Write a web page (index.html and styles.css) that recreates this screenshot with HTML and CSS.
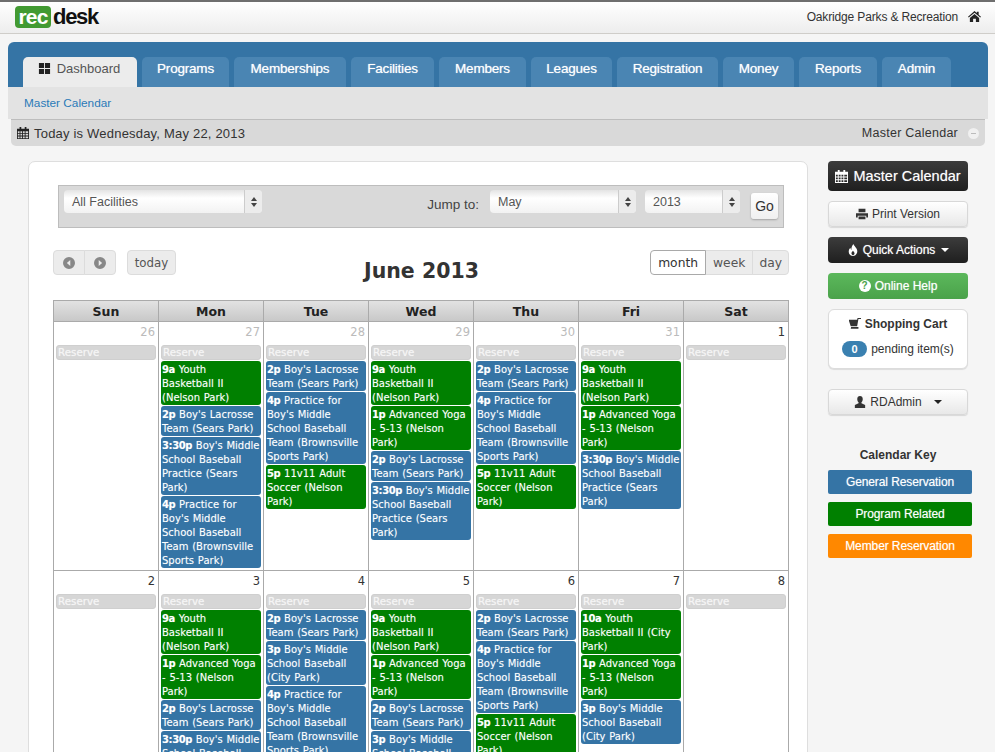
FILE: index.html
```html
<!DOCTYPE html>
<html lang="en">
<head>
<meta charset="utf-8">
<title>Rec Desk - Master Calendar</title>
<link rel="stylesheet" href="styles.css">
</head>
<body>
<svg class="defs" width="0" height="0">
  <symbol id="i-cal" viewBox="0 0 14 14"><path d="M3 0h2v2h4V0h2v2h3v12H0V2h3zM1 5v2h2V5zm3 0v2h2V5zm3 0v2h2V5zm3 0v2h3V5zM1 8v2h2V8zm3 0v2h2V8zm3 0v2h2V8zm3 0v2h3V8zM1 11v2h2v-2zm3 0v2h2v-2zm3 0v2h2v-2zm3 0v2h3v-2z" fill-rule="evenodd"/></symbol>
  <symbol id="i-dash" viewBox="0 0 14 14"><path d="M1 1h5.500v5.500H1zM7.500 1H13v5.500H7.500zM1 7.500h5.500V13H1zM7.500 7.500H13V13H7.500z"/></symbol>
  <symbol id="i-home" viewBox="0 0 14 14"><path d="M7 1l2.500 2.200V2h2v3l2.500 2.300-.8.800L7 3 .8 8.100 0 7.300zM2 8.500L7 4.300l5 4.200V13H8.500V9.500h-3V13H2z"/></symbol>
  <symbol id="i-print" viewBox="0 0 14 14"><path d="M3 1h8v4H3zM0 6h14v5h-2V9H2v2H0zM3 10h8v3H3z"/></symbol>
  <symbol id="i-fire" viewBox="0 0 14 14"><path d="M7.500 0c.5 2.500 4.500 4.500 4.500 8.500 0 3-2.200 5.500-5 5.500s-5-2.200-5-5c0-2 1-3.500 2-4.500 0 1.200.4 2 1.200 2.500C4.800 4 6 2 7.500 0zM7 8c-1 1.200-1.800 2-1.800 3.200 0 1 .8 1.800 1.800 1.800s1.800-.8 1.800-1.800C8.800 10 7.800 9.200 7 8z" fill-rule="evenodd"/></symbol>
  <symbol id="i-cart" viewBox="0 0 14 14"><path d="M0 2h9.500l.5-2h4v1.300h-3L9.500 9.500H2L0 3.500zM2.500 10.500H11v2H2z"/></symbol>
  <symbol id="i-user" viewBox="0 0 14 14"><path d="M7 0c2 0 3.200 1.500 3.200 3.600 0 1.600-.6 3-1.500 3.800v1.100L13 10.500V14H1v-3.500l4.300-2V7.400C4.400 6.600 3.800 5.200 3.800 3.600 3.800 1.500 5 0 7 0z"/></symbol>
  <symbol id="i-prev" viewBox="0 0 14 14"><path d="M7 0a7 7 0 1 1 0 14A7 7 0 0 1 7 0zm1.500 3.500L4.500 7l4 3.500z" fill-rule="evenodd"/></symbol>
  <symbol id="i-next" viewBox="0 0 14 14"><path d="M7 0a7 7 0 1 1 0 14A7 7 0 0 1 7 0zM5.500 3.500v7l4-3.500z" fill-rule="evenodd"/></symbol>
  <symbol id="i-updown" viewBox="0 0 6 10"><path d="M3 0l3 4H0zM0 6h6l-3 4z"/></symbol>
</svg>
<div class="page">
  <header class="topbar">
    <div class="logo"><span class="logo-rec">rec</span><span class="logo-desk">desk</span></div>
    <div class="org">Oakridge Parks &amp; Recreation <svg class="ico-home"><use href="#i-home"/></svg></div>
  </header>

  <nav class="panel">
    <div class="tabs">
      <a class="tab tab-active"><svg class="ico-dash"><use href="#i-dash"/></svg>Dashboard</a>
      <a class="tab">Programs</a>
      <a class="tab">Memberships</a>
      <a class="tab">Facilities</a>
      <a class="tab">Members</a>
      <a class="tab">Leagues</a>
      <a class="tab">Registration</a>
      <a class="tab">Money</a>
      <a class="tab">Reports</a>
      <a class="tab">Admin</a>
    </div>
    <div class="subnav"><a class="sublink">Master Calendar</a></div>
  </nav>
  <div class="todaybar">
    <div class="today-left"><svg class="ico-cal"><use href="#i-cal"/></svg>Today is Wednesday, May 22, 2013</div>
    <div class="today-right">Master Calendar<span class="collapse"></span></div>
  </div>

  <div class="content">
    <main class="card">
      <div class="filter">
        <div class="sel sel-fac"><span>All Facilities</span><i class="sel-arrow"><svg class="ico-updown"><use href="#i-updown"/></svg></i></div>
        <div class="jump">
          <label class="jump-label">Jump to:</label>
          <div class="sel sel-month"><span>May</span><i class="sel-arrow"><svg class="ico-updown"><use href="#i-updown"/></svg></i></div>
          <div class="sel sel-year"><span>2013</span><i class="sel-arrow"><svg class="ico-updown"><use href="#i-updown"/></svg></i></div>
          <button class="go">Go</button>
        </div>
      </div>

      <div class="cal-tools">
        <div class="tools-left">
          <div class="btn-group">
            <span class="fc-btn fc-arrow"><svg class="ico-nav"><use href="#i-prev"/></svg></span>
            <span class="fc-btn fc-arrow"><svg class="ico-nav"><use href="#i-next"/></svg></span>
          </div>
          <span class="fc-btn fc-today">today</span>
        </div>
        <h1 class="cal-title">June 2013</h1>
        <div class="btn-group">
          <span class="fc-btn fc-view fc-on">month</span>
          <span class="fc-btn fc-view">week</span>
          <span class="fc-btn fc-view fc-day">day</span>
        </div>
      </div>

      <div class="cal">
        <div class="dow">Sun</div><div class="dow">Mon</div><div class="dow">Tue</div><div class="dow">Wed</div><div class="dow">Thu</div><div class="dow">Fri</div><div class="dow">Sat</div>

        <div class="day"><div class="num off">26</div><div class="reserve">Reserve</div></div>
        <div class="day"><div class="num off">27</div><div class="reserve">Reserve</div>
          <div class="ev g"><b>9a</b> Youth Basketball II (Nelson Park)</div>
          <div class="ev"><b>2p</b> Boy's Lacrosse Team (Sears Park)</div>
          <div class="ev"><b>3:30p</b> Boy's Middle School Baseball Practice (Sears Park)</div>
          <div class="ev"><b>4p</b> Practice for Boy's Middle School Baseball Team (Brownsville Sports Park)</div>
        </div>
        <div class="day"><div class="num off">28</div><div class="reserve">Reserve</div>
          <div class="ev"><b>2p</b> Boy's Lacrosse Team (Sears Park)</div>
          <div class="ev"><b>4p</b> Practice for Boy's Middle School Baseball Team (Brownsville Sports Park)</div>
          <div class="ev g"><b>5p</b> 11v11 Adult Soccer (Nelson Park)</div>
        </div>
        <div class="day"><div class="num off">29</div><div class="reserve">Reserve</div>
          <div class="ev g"><b>9a</b> Youth Basketball II (Nelson Park)</div>
          <div class="ev g"><b>1p</b> Advanced Yoga - 5-13 (Nelson Park)</div>
          <div class="ev"><b>2p</b> Boy's Lacrosse Team (Sears Park)</div>
          <div class="ev"><b>3:30p</b> Boy's Middle School Baseball Practice (Sears Park)</div>
        </div>
        <div class="day"><div class="num off">30</div><div class="reserve">Reserve</div>
          <div class="ev"><b>2p</b> Boy's Lacrosse Team (Sears Park)</div>
          <div class="ev"><b>4p</b> Practice for Boy's Middle School Baseball Team (Brownsville Sports Park)</div>
          <div class="ev g"><b>5p</b> 11v11 Adult Soccer (Nelson Park)</div>
        </div>
        <div class="day"><div class="num off">31</div><div class="reserve">Reserve</div>
          <div class="ev g"><b>9a</b> Youth Basketball II (Nelson Park)</div>
          <div class="ev g"><b>1p</b> Advanced Yoga - 5-13 (Nelson Park)</div>
          <div class="ev"><b>3:30p</b> Boy's Middle School Baseball Practice (Sears Park)</div>
        </div>
        <div class="day"><div class="num">1</div><div class="reserve">Reserve</div></div>

        <div class="day"><div class="num">2</div><div class="reserve">Reserve</div></div>
        <div class="day"><div class="num">3</div><div class="reserve">Reserve</div>
          <div class="ev g"><b>9a</b> Youth Basketball II (Nelson Park)</div>
          <div class="ev g"><b>1p</b> Advanced Yoga - 5-13 (Nelson Park)</div>
          <div class="ev"><b>2p</b> Boy's Lacrosse Team (Sears Park)</div>
          <div class="ev"><b>3:30p</b> Boy's Middle School Baseball Practice (Sears Park)</div>
        </div>
        <div class="day"><div class="num">4</div><div class="reserve">Reserve</div>
          <div class="ev"><b>2p</b> Boy's Lacrosse Team (Sears Park)</div>
          <div class="ev"><b>3p</b> Boy's Middle School Baseball (City Park)</div>
          <div class="ev"><b>4p</b> Practice for Boy's Middle School Baseball Team (Brownsville Sports Park)</div>
        </div>
        <div class="day"><div class="num">5</div><div class="reserve">Reserve</div>
          <div class="ev g"><b>9a</b> Youth Basketball II (Nelson Park)</div>
          <div class="ev g"><b>1p</b> Advanced Yoga - 5-13 (Nelson Park)</div>
          <div class="ev"><b>2p</b> Boy's Lacrosse Team (Sears Park)</div>
          <div class="ev"><b>3p</b> Boy's Middle School Baseball (City Park)</div>
        </div>
        <div class="day"><div class="num">6</div><div class="reserve">Reserve</div>
          <div class="ev"><b>2p</b> Boy's Lacrosse Team (Sears Park)</div>
          <div class="ev"><b>4p</b> Practice for Boy's Middle School Baseball Team (Brownsville Sports Park)</div>
          <div class="ev g"><b>5p</b> 11v11 Adult Soccer (Nelson Park)</div>
        </div>
        <div class="day"><div class="num">7</div><div class="reserve">Reserve</div>
          <div class="ev g"><b>10a</b> Youth Basketball II (City Park)</div>
          <div class="ev g"><b>1p</b> Advanced Yoga - 5-13 (Nelson Park)</div>
          <div class="ev"><b>3p</b> Boy's Middle School Baseball (City Park)</div>
        </div>
        <div class="day"><div class="num">8</div><div class="reserve">Reserve</div></div>
      </div>
    </main>

    <aside class="side">
      <a class="sbtn sbtn-dark sbtn-big"><svg class="ico-big"><use href="#i-cal"/></svg>Master Calendar</a>
      <a class="sbtn sbtn-light"><svg class="ico"><use href="#i-print"/></svg>Print Version</a>
      <a class="sbtn sbtn-dark sbtn-bold"><svg class="ico"><use href="#i-fire"/></svg>Quick Actions<i class="caret"></i></a>
      <a class="sbtn sbtn-green sbtn-bold"><span class="help">?</span>Online Help</a>
      <div class="cart">
        <div class="cart-title"><svg class="ico"><use href="#i-cart"/></svg>Shopping Cart</div>
        <div class="cart-line"><span class="badge">0</span>pending item(s)</div>
      </div>
      <a class="sbtn sbtn-light sbtn-user"><svg class="ico"><use href="#i-user"/></svg>RDAdmin<i class="caret caret-dark"></i></a>
      <div class="key-title">Calendar Key</div>
      <div class="key key-blue">General Reservation</div>
      <div class="key key-green">Program Related</div>
      <div class="key key-orange">Member Reservation</div>
    </aside>
  </div>
</div>
</body>
</html>
```

FILE: styles.css
```css
html, body {
  margin: 0;
  padding: 0;
  height: 752px;
  overflow: hidden;
  background: #f5f5f5;
}
body {
  font-family: "Liberation Sans", Arial, sans-serif;
  font-size: 13px;
  color: #333;
}
.defs { display: block; height: 0; }
svg { fill: currentColor; display: inline-block; }
.page { height: 752px; overflow: hidden; }

.topbar {
  height: 31px;
  border-top: 2px solid #6f6f6f;
  border-bottom: 1px solid #cfcdc9;
  background: linear-gradient(#ffffff, #ededed);
  display: flex;
  justify-content: space-between;
  align-items: center;
  padding: 0 14px 0 15px;
}
.logo { display: flex; align-items: center; font-weight: bold; font-size: 21px; margin-top: -2px; }
.logo-rec {
  background: #429a32;
  color: #fff;
  border-radius: 4px;
  height: 22px;
  width: 36px;
  display: flex;
  align-items: center;
  justify-content: center;
  letter-spacing: -0.8px;
}
.logo-desk { color: #111; margin-left: 2px; font-size: 22px; letter-spacing: -1.3px; }
.org { display: flex; align-items: center; font-size: 12px; letter-spacing: -0.15px; color: #333; margin-top: -2px; }
.ico-home { width: 13px; height: 13px; margin-left: 10px; color: #222; }

.panel {
  margin: 8px 7px 0 8px;
  border-radius: 6px 6px 0 0;
  background: #3574a5;
  padding-top: 15px;
}
.tabs {
  display: grid;
  grid-template-columns: 114px 87px 112px 83px 87px 81px 101px 71px 78px 69px;
  column-gap: 5px;
  padding-left: 15px;
  height: 30px;
}
.tab {
  background: #4a85b3;
  border-radius: 5px 5px 0 0;
  color: #fff;
  font-size: 13.500px;
  letter-spacing: -0.2px;
  display: flex;
  align-items: center;
  justify-content: center;
  padding-bottom: 7px;
  box-sizing: border-box;
  text-shadow: 0 0 1px rgba(255,255,255,.7);
}
.tab-active {
  background: #ececec;
  color: #555;
  letter-spacing: 0;
  font-size: 13px;
  padding-right: 2px;
  text-shadow: none;
}
.ico-dash { width: 13px; height: 13px; margin-right: 6px; color: #222; }
.subnav {
  background: #e3e3e3;
  height: 32px;
  padding-left: 16px;
  display: flex;
  align-items: center;
}
.sublink { color: #2a7ab8; font-size: 11.800px; }

.todaybar {
  margin: 0 10px 0 11px;
  height: 26px;
  border-top: 1px solid #bdbdbd;
  background: #d9d9d9;
  border-radius: 0 0 5px 5px;
  display: flex;
  align-items: center;
  justify-content: space-between;
  padding: 0 6px 0 6px;
  font-size: 13px;
  letter-spacing: 0.2px;
  color: #333;
}
.today-left, .today-right { display: flex; align-items: center; }
.ico-cal { width: 12px; height: 12px; margin-right: 5px; color: #222; }
.today-right { font-size: 12.500px; letter-spacing: 0.25px; }
.collapse {
  width: 11px;
  height: 11px;
  border-radius: 50%;
  background: #f0f0f0;
  margin-left: 10px;
  position: relative;
}
.collapse::after {
  content: "";
  position: absolute;
  left: 3px;
  top: 5px;
  width: 5px;
  height: 1px;
  background: #bbb;
}

.content {
  display: flex;
  align-items: flex-start;
  padding: 15px 0 0 28px;
}
.card {
  width: 780px;
  box-sizing: border-box;
  background: #fff;
  border: 1px solid #dedede;
  border-radius: 7px;
  padding: 23px 18px 20px 24px;
}
.filter {
  margin: 0 5px;
  height: 43px;
  box-sizing: border-box;
  background: #d9d9d9;
  border: 1px solid #bdbdbd;
  display: flex;
  align-items: flex-start;
  justify-content: space-between;
  padding: 4px 5px 0 5px;
}
.sel {
  height: 23px;
  box-sizing: border-box;
  background: linear-gradient(#e4e4e4, #ffffff 35%, #f2f2f2);
  border-radius: 4px;
  display: flex;
  align-items: center;
  justify-content: space-between;
  color: #555;
  font-size: 12.500px;
  padding-left: 8px;
}
.sel-fac { width: 198px; }
.sel-month { width: 146px; }
.sel-year { width: 95px; }
.sel-arrow {
  width: 17px;
  height: 23px;
  border-left: 1px solid #ccc;
  display: flex;
  align-items: center;
  justify-content: center;
  background: #ececec;
  border-radius: 0 4px 4px 0;
}
.ico-updown { width: 6px; height: 10px; color: #444; }
.jump { display: flex; align-items: flex-start; }
.jump-label { font-size: 13.500px; color: #444; margin: 7px 11px 0 0; }
.sel-year { margin-left: 9px; }
.go {
  width: 27px;
  height: 26px;
  margin: 3px 0 0 11px;
  padding: 0;
  border: 0;
  border-radius: 3px;
  background: linear-gradient(#ffffff, #f0f0f0);
  box-shadow: 0 1px 2px rgba(0,0,0,.25);
  font-family: inherit;
  font-size: 14px;
  color: #333;
}

.cal-tools {
  display: flex;
  justify-content: space-between;
  align-items: flex-start;
  margin-top: 22px;
  width: 736px;
  height: 50px;
  position: relative;
}
.tools-left { display: flex; gap: 11px; }
.btn-group { display: flex; }
.fc-btn {
  height: 25px;
  box-sizing: border-box;
  background: #ececec;
  border: 1px solid #dcdcdc;
  color: #555;
  display: flex;
  align-items: center;
  justify-content: center;
  font-family: "DejaVu Sans", Verdana, sans-serif;
  font-size: 11.800px;
}
.btn-group .fc-btn + .fc-btn { margin-left: -1px; }
.btn-group .fc-btn:first-child { border-radius: 4px 0 0 4px; }
.btn-group .fc-btn:last-child { border-radius: 0 4px 4px 0; }
.fc-arrow { width: 32px; }
.fc-today { width: 49px; border-radius: 4px; }
.fc-view { padding: 0 7px; font-size: 12.300px; }
.fc-day { padding: 0 6px; }
.fc-on { background: #fff; border-color: #a9a9a9; color: #333; position: relative; z-index: 1; }
.ico-nav { width: 12px; height: 12px; color: #888; }
.cal-title {
  position: absolute;
  left: 1px;
  right: 0;
  top: 8px;
  margin: 0;
  text-align: center;
  font-family: "DejaVu Sans", Verdana, sans-serif;
  font-size: 20.500px;
  line-height: 26px;
  font-weight: bold;
  color: #333;
}

.cal {
  width: 736px;
  display: grid;
  grid-template-columns: repeat(7, 105px);
  border-left: 1px solid #aaa;
  box-sizing: border-box;
}
.dow {
  height: 22px;
  box-sizing: border-box;
  border-top: 1px solid #aaa;
  border-right: 1px solid #aaa;
  border-bottom: 1px solid #aaa;
  background: linear-gradient(#e2e2e2, #c8c8c8);
  display: flex;
  align-items: center;
  justify-content: center;
  font-family: "DejaVu Sans", Verdana, sans-serif;
  font-size: 12.500px;
  font-weight: bold;
  color: #222;
}
.day {
  box-sizing: border-box;
  min-height: 249px;
  border-right: 1px solid #aaa;
  border-bottom: 1px solid #aaa;
  padding: 0 2px 1px;
  font-family: "DejaVu Sans", Verdana, sans-serif;
}
.num {
  height: 23px;
  line-height: 20px;
  text-align: right;
  font-size: 11.500px;
  color: #333;
  padding-right: 1px;
}
.off { color: #bbb; }
.reserve {
  height: 15px;
  box-sizing: border-box;
  background: #d6d6d6;
  border: 1px solid #cfcfcf;
  border-radius: 3px;
  color: #f5f5f5;
  font-size: 10.300px;
  line-height: 13px;
  padding-left: 1px;
  margin-bottom: 1px;
  width: 100px;
  text-shadow: 0 0 1px rgba(255,255,255,.6);
}
.ev {
  width: 100px;
  box-sizing: border-box;
  background: #3574a5;
  color: #fff;
  border-radius: 3px;
  padding: 2px 0 0 1px;
  font-size: 10px;
  word-spacing: 0.6px;
  line-height: 14px;
  margin-bottom: 1px;
  text-shadow: 0 0 1px rgba(255,255,255,.35);
}
.ev b { letter-spacing: -0.4px; }
.g { background: #008000; }

.side {
  width: 144px;
  margin-left: 20px;
  display: flex;
  flex-direction: column;
  align-items: flex-start;
}
.sbtn {
  width: 140px;
  height: 26px;
  box-sizing: border-box;
  border-radius: 4px;
  display: flex;
  align-items: center;
  justify-content: center;
  font-size: 12px;
  margin-bottom: 10px;
}
.sbtn-dark {
  background: linear-gradient(#3c3c3c, #1f1f1f);
  color: #fff;
}
.sbtn-big {
  height: 30px;
  font-size: 14.500px;
  text-shadow: 0 0 1px rgba(255,255,255,.5);
}
.sbtn-bold { text-shadow: 0 0 1px rgba(255,255,255,.6); }
.sbtn-light {
  background: linear-gradient(#ffffff, #e8e8e8);
  border: 1px solid #d8d8d8;
  box-shadow: 0 1px 1px rgba(0,0,0,.12);
  color: #333;
}
.sbtn-green { background: linear-gradient(#5cb85c, #4aa24a); color: #fff; }
.ico { width: 12px; height: 12px; margin-right: 4px; }
.ico-big { width: 13px; height: 13px; margin-right: 5px; }
.caret {
  width: 0;
  height: 0;
  border-left: 4px solid transparent;
  border-right: 4px solid transparent;
  border-top: 4px solid #fff;
  margin-left: 6px;
}
.caret-dark { border-top-color: #222; margin-left: 12px; }
.help {
  width: 12px;
  height: 12px;
  border-radius: 50%;
  background: #fff;
  color: #4aa24a;
  font-size: 10px;
  font-weight: bold;
  line-height: 12px;
  text-align: center;
  margin-right: 4px;
  text-shadow: none;
}
.cart {
  width: 140px;
  height: 60px;
  box-sizing: border-box;
  background: #fff;
  border: 1px solid #dcdcdc;
  border-radius: 6px;
  box-shadow: 0 1px 1px rgba(0,0,0,.1);
  margin-bottom: 20px;
  padding-top: 5px;
  font-size: 12px;
}
.cart-title {
  display: flex;
  align-items: center;
  justify-content: center;
  font-weight: bold;
  height: 18px;
}
.cart-line {
  display: flex;
  align-items: center;
  justify-content: center;
  margin-top: 8px;
  height: 16px;
}
.badge {
  width: 25px;
  height: 16px;
  border-radius: 8px;
  background: #3a80b0;
  color: #fff;
  font-weight: bold;
  font-size: 11px;
  line-height: 16px;
  text-align: center;
  margin-right: 4px;
}
.sbtn-user { margin-bottom: 0; }
.key-title {
  width: 140px;
  margin-top: 32px;
  height: 15px;
  line-height: 16px;
  text-align: center;
  font-weight: bold;
  font-size: 12px;
}
.key {
  width: 144px;
  height: 24px;
  margin-top: 8px;
  border-radius: 2px;
  color: #fff;
  font-size: 12px;
  letter-spacing: -0.1px;
  display: flex;
  align-items: center;
  justify-content: center;
  text-shadow: 0 0 1px rgba(255,255,255,.5);
}
.key-blue { background: #3574a5; }
.key-green { background: #008000; }
.key-orange { background: #ff8800; }
```
